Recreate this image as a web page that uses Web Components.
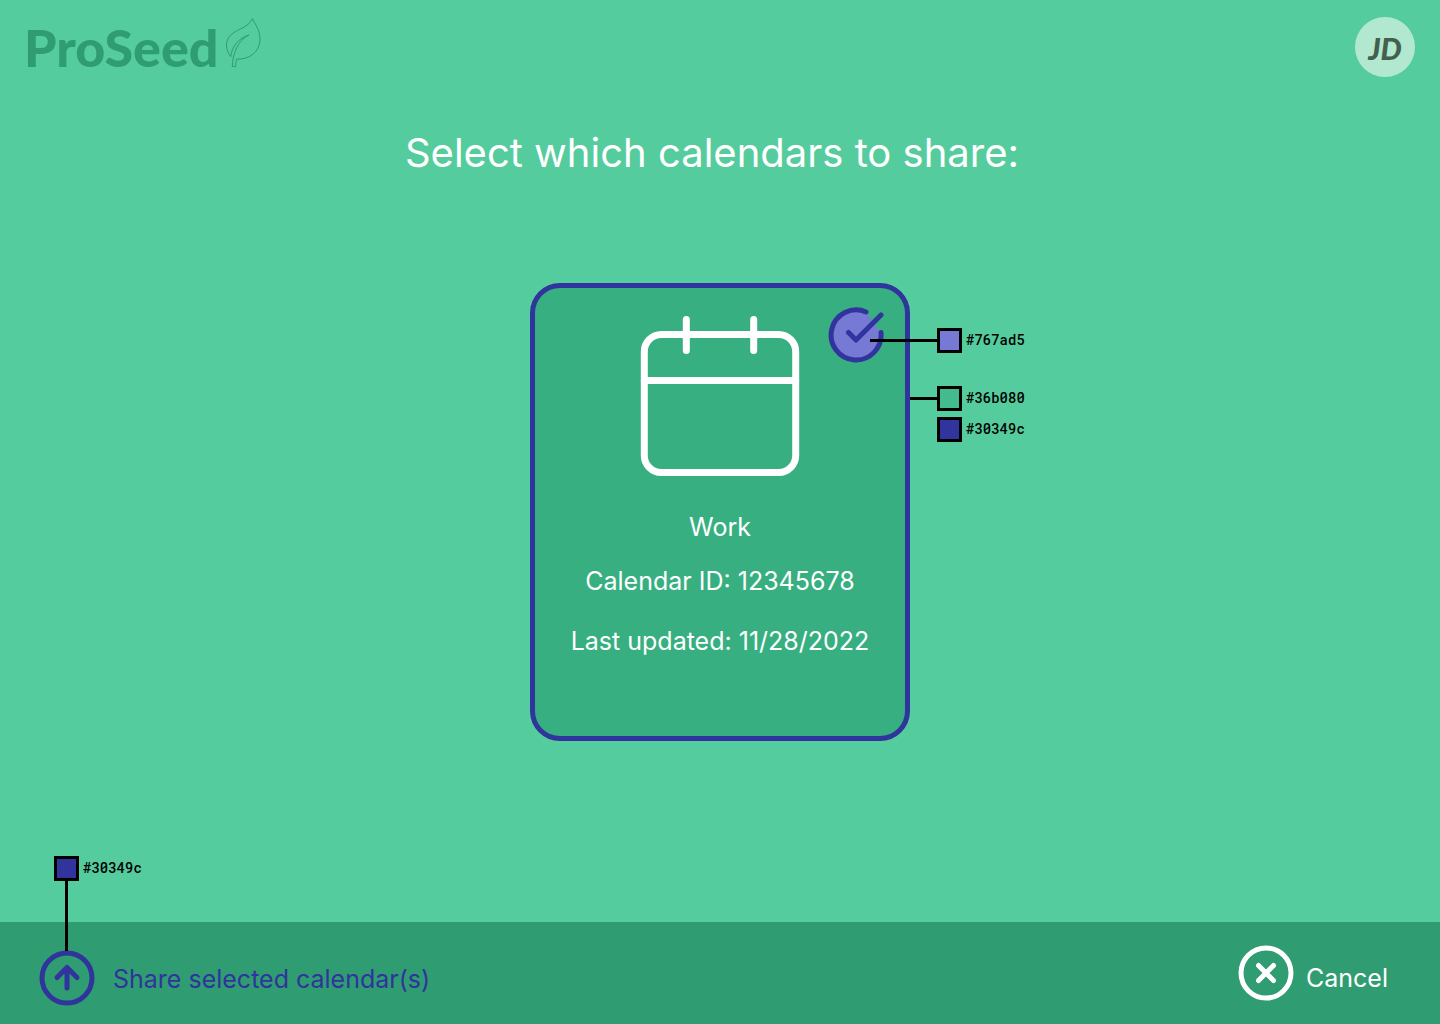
<!DOCTYPE html>
<html lang="en">
<head>
<meta charset="utf-8">
<meta name="viewport" content="width=device-width, initial-scale=1">
<title>ProSeed</title>
<style>
  body { margin: 0; background: #55cc9e; color: #fff; font-family: Inter, "Liberation Sans", sans-serif; font-weight: 400; }
</style>
</head>
<body>
<share-page></share-page>

<template id="share-page">
  <style>
    :host { display: flex; flex-direction: column; min-height: 100vh; }
    main { flex: 1; display: flex; flex-direction: column; align-items: center; padding: 35px 16px 40px 0; }
    h1 { margin: 0 0 106px; font-size: 40px; line-height: 48px; font-weight: 400; text-align: center; }
    .cards { align-self: stretch; display: flex; justify-content: center; margin-right: -16px; }
    footer { display: flex; justify-content: space-between; align-items: flex-start; padding: 23px 52px 18px 39px; background: #2f9c72; }
    .share { --action-color: #30349c; --action-gap: 18px; padding-top: 5px; }
    .cancel { --action-gap: 12px; --label-top: 17px; }
  </style>
  <site-header></site-header>
  <main>
    <h1>Select which calendars to share:</h1>
    <div class="cards">
      <calendar-card>
        <span slot="name">Work</span>
        <span slot="id">Calendar ID: 12345678</span>
        <span slot="date">Last updated: 11/28/2022</span>
      </calendar-card>
    </div>
  </main>
  <footer>
    <action-button class="share">
      <svg slot="icon" width="56" height="56" viewBox="0 0 56 56" fill="none" stroke="currentColor" stroke-width="5" stroke-linecap="round" stroke-linejoin="round" aria-hidden="true"><circle cx="28" cy="28" r="25"/><path d="M28 38V18M18 27.500L28 17.500L38 27.500"/></svg>
      Share selected calendar(s)
      <color-note slot="note" class="up" color="#30349c" tail="70">#30349c</color-note>
    </action-button>
    <action-button class="cancel">
      <svg slot="icon" width="56" height="56" viewBox="0 0 56 56" fill="none" stroke="currentColor" stroke-width="5" stroke-linecap="round" aria-hidden="true"><circle cx="28" cy="28" r="25"/><path d="M20.500 20.500L35.500 35.500M35.500 20.500L20.500 35.500"/></svg>
      Cancel
    </action-button>
  </footer>
</template>

<template id="site-header">
  <style>
    :host { display: block; }
    header { display: flex; justify-content: space-between; align-items: flex-start; padding: 17px 25px 17px 24px; font-family: Lato, "Open Sans", sans-serif; font-weight: 900; }
    a { display: flex; align-items: flex-start; gap: 6px; color: #2f9c72; text-decoration: none; }
    .name { font-size: 52px; line-height: 60px; }
    svg { display: block; }
    button { width: 60px; height: 60px; padding: 2px 0 0; border: 0; border-radius: 50%; background: #b3e8d0; color: #43604f; font: inherit; font-size: 30px; line-height: 36px; font-style: italic; cursor: pointer; }
  </style>
  <header>
    <a href="#" aria-label="ProSeed home">
      <span class="name">ProSeed</span>
      <svg width="37" height="51" viewBox="0 0 37 51" fill="none" stroke="currentColor" stroke-width="1" stroke-linejoin="round" aria-hidden="true"><path d="M27.300 1.700C22 14 2 12 1.500 28C1.500 33 3.500 36.500 5.700 39.700C7 29 14 21 24 18C13 23 7.500 37 7.300 49.500L10.700 49.700C10.700 46 11 44 11.700 42C24 43 35 35 35 22C35 14 31 8 27.300 1.700Z"/></svg>
    </a>
    <button type="button" aria-label="Account JD">JD</button>
  </header>
</template>

<template id="calendar-card">
  <style>
    :host { display: block; position: relative; width: 380px; max-width: 100%; }
    label { box-sizing: border-box; display: flex; flex-direction: column; align-items: center; padding: 28px 24px 80px; border: 5px solid #30349c; border-radius: 30px; background: #37af81; font-size: 25px; line-height: 30px; text-align: center; cursor: pointer; }
    input { position: absolute; top: 24px; right: 26px; width: 56px; height: 56px; margin: 0; opacity: 0; }
    .check { position: absolute; top: 24px; right: 26px; pointer-events: none; }
    input:not(:checked) + .check { visibility: hidden; }
    .name { margin-top: 36px; }
    .id { margin-top: 24px; }
    .date { margin-top: 30px; }
    .state { position: absolute; top: 45px; left: 340px; }
    .frame { position: absolute; top: 103px; left: 100%; display: flex; flex-direction: column; align-items: flex-end; gap: 6px; }
  </style>
  <label>
    <input type="checkbox" checked>
    <svg class="check" width="56" height="56" viewBox="0 0 56 56" fill="#767ad5" stroke="#30349c" stroke-width="5" stroke-linecap="round" stroke-linejoin="round" aria-hidden="true"><path d="M38 5A25 25 0 1 0 53 25.500"/><path fill="none" d="M20.500 25.500L28 33L53 8"/></svg>
    <svg width="160" height="160" viewBox="0 0 160 160" fill="none" stroke="#fff" stroke-width="7" stroke-linecap="round" aria-hidden="true"><rect x="4.300" y="18.500" width="151.400" height="138" rx="17"/><path d="M4.300 64.500H155.700M46.300 3.500V34.500M113.700 3.500V34.500"/></svg>
    <span class="name"><slot name="name"></slot></span>
    <span class="id"><slot name="id"></slot></span>
    <span class="date"><slot name="date"></slot></span>
  </label>
  <color-note class="state" color="#767ad5" tail="67">#767ad5</color-note>
  <div class="frame">
    <color-note color="#42bc8c" tail="27">#36b080</color-note>
    <color-note color="#30349c">#30349c</color-note>
  </div>
</template>

<template id="action-button">
  <style>
    :host { display: block; position: relative; }
    button { display: flex; align-items: flex-start; gap: var(--action-gap); padding: 0; border: 0; background: none; color: var(--action-color, #fff); font: inherit; font-size: 25px; text-align: left; cursor: pointer; }
    ::slotted(svg) { display: block; flex: none; }
    .label { padding-top: var(--label-top, 13px); line-height: 32px; }
    .note { position: absolute; left: 15px; bottom: 55px; }
  </style>
  <button type="button"><slot name="icon"></slot><span class="label"><slot></slot></span></button>
  <div class="note"><slot name="note"></slot></div>
</template>

<template id="color-note">
  <style>
    :host { display: grid; grid-template-columns: auto 25px auto; align-items: center; color: #000; font: 500 14px/18px "Roboto Mono", "Liberation Mono", monospace; pointer-events: none; }
    .tail { height: 3px; background: #000; }
    .swatch { box-sizing: border-box; width: 25px; height: 25px; border: 3px solid #000; }
    .text { margin-left: 4px; padding-bottom: 2px; }
    :host(.up) { grid-template-columns: 25px auto; }
    :host(.up) .tail { grid-area: 2 / 1; justify-self: center; width: 3px; }
    :host(.up) .swatch { grid-area: 1 / 1; }
  </style>
  <span class="tail"></span><span class="swatch"></span><span class="text"><slot></slot></span>
</template>

<script>
  class TemplateElement extends HTMLElement {
    constructor() {
      super();
      const template = document.getElementById(this.localName);
      this.attachShadow({ mode: "open" }).append(template.content.cloneNode(true));
    }
  }
  class SharePage extends TemplateElement {}
  class SiteHeader extends TemplateElement {}
  class CalendarCard extends TemplateElement {}
  class ActionButton extends TemplateElement {}
  class ColorNote extends TemplateElement {
    connectedCallback() {
      const tail = this.shadowRoot.querySelector(".tail");
      const length = (this.getAttribute("tail") || 0) + "px";
      if (this.classList.contains("up")) tail.style.height = length;
      else tail.style.width = length;
      this.shadowRoot.querySelector(".swatch").style.background = this.getAttribute("color");
    }
  }
  customElements.define("color-note", ColorNote);
  customElements.define("action-button", ActionButton);
  customElements.define("calendar-card", CalendarCard);
  customElements.define("site-header", SiteHeader);
  customElements.define("share-page", SharePage);
</script>
</body>
</html>
